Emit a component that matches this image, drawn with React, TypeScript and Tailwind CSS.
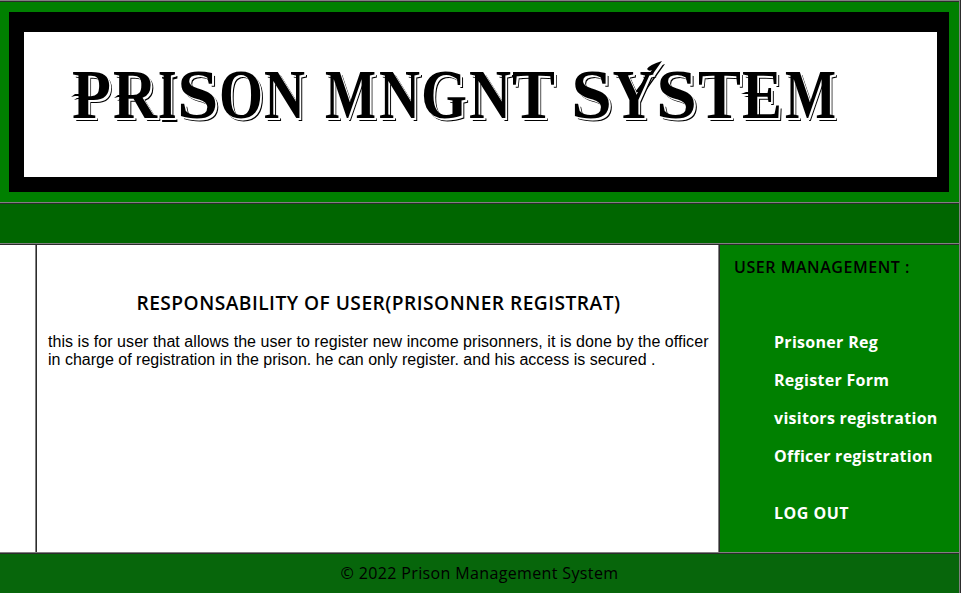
import React from "react";

const sans = "font-['Open_Sans','Noto_Sans',sans-serif]";
const edge = "border-t border-[#808080]";
const inner = "border-t border-[#2c2c2c]";

// Every letter of the banner with its left edge and its width.
const words: [string, number, number][][] = [
  [["P", 72, 39], ["R", 113, 44], ["I", 158, 18.5], ["S", 177, 41.5], ["O", 219, 44], ["N", 264, 41]],
  [["M", 325, 51], ["N", 379, 41], ["G", 421, 46], ["N", 469, 42], ["T", 512, 43]],
  [["S", 571, 41], ["Y", 612.5, 42], ["S", 656, 41], ["T", 698, 43], ["E", 742, 40], ["M", 785, 51]],
];

// Advance widths of the bold serif capitals, in ems.
const advance: Record<string, number> = {
  P: 0.611, R: 0.722, I: 0.389, S: 0.556, O: 0.778, N: 0.722,
  M: 0.944, G: 0.778, T: 0.667, Y: 0.722, E: 0.667,
};
const size = 70;

function Banner() {
  return (
    <svg
      className="block h-[145px] w-[913px] fill-black font-['Liberation_Serif',serif] text-[70px] font-bold [text-shadow:1px_1px_0_#fff,2px_2px_0_#fff,3px_3px_0_#000]"
      viewBox="24 32 913 145"
    >
      {[
        { d: 3, c: "#000" },
        { d: 2, c: "#fff" },
        { d: 1, c: "#fff" },
        { d: 0, c: "#000" },
      ].map((layer) => (
        <g key={layer.d} transform={`translate(${layer.d} ${layer.d})`} fill={layer.c}>
          <path d="M647 69 Q649 65 662 61 L640 92 L635 92 L652 70 Q649 72 647 69Z" />
          <path d="M71 97 L75 94 H86 V96 H75Z" />
          <path d="M114 98 L118 95 H129 V97 H118Z" />
          <path d="M741 94 L746 92 H757 V94 H746Z" />
        </g>
      ))}
      {words.map((letters, i) => (
        <g key={i}>
          {letters.map(([ch, x, w]) => (
            <text key={x} transform={`translate(${x} 118) scale(${w / (advance[ch] * size)} 1)`}>
              {ch}
            </text>
          ))}
        </g>
      ))}
    </svg>
  );
}

function MenuLink({ label, className }: { label: string; className: string }) {
  return (
    <a className={`block h-[38px] whitespace-nowrap leading-[20px] ${className}`}>{label}</a>
  );
}

export default function App() {
  return (
    <div className={`flex h-[593px] w-[961px] overflow-hidden border-r border-[#2c2c2c] bg-white text-black ${sans}`}>
      <div className="flex w-[960px] flex-col border-r border-[#808080]">
        <header className={edge}>
          <div className={`h-[201px] bg-[#008000] pt-[10px] pl-[9px] ${inner}`}>
            <div className="h-[180px] w-[940px] bg-black pt-[20px] pl-[15px]">
              <div className="h-[145px] w-[913px] bg-white">
                <Banner />
              </div>
            </div>
          </div>
        </header>
        <nav className={edge}>
          <div className={`h-[40px] bg-[#006600] ${inner}`} />
        </nav>
        <main className={edge}>
          <div className={`flex h-[308px] ${inner}`}>
            <div className="w-[36px] border-r border-[#808080]" />
            <section className="w-[683px] border-r border-l border-l-[#2c2c2c] border-r-[#808080] pt-[46px] pl-[11px]">
              <h1 className="h-[24px] w-[661px] text-center text-[19.2px] leading-[24px] font-semibold whitespace-nowrap tracking-[0.46px]">
                RESPONSABILITY OF USER(PRISONNER REGISTRAT)
              </h1>
              <p className="mt-[18px] font-['Liberation_Sans',Arial,sans-serif] text-[16px] leading-[18px] whitespace-nowrap">
                <span className="tracking-[0.055px]">
                  this is for user that allows the user to register new income prisonners, it is done by the officer
                </span>
                <br />
                in charge of registration in the prison. he can only register. and his access is secured .
              </p>
            </section>
            <aside className="w-[240px] border-l border-[#2c2c2c] bg-[#008000] pt-[12px] pl-[14px] text-[16px]">
              <h2 className="h-[20px] leading-[20px] font-semibold whitespace-nowrap tracking-[0.54px]">USER MANAGEMENT :</h2>
              <div className="pt-[55px] pl-[40px] font-bold text-white">
                <MenuLink label="Prisoner Reg" className="tracking-[0.3px]" />
                <MenuLink label="Register Form" className="tracking-[0.3px]" />
                <MenuLink label="visitors registration" className="tracking-[0.28px]" />
                <MenuLink label="Officer registration" className="tracking-[0.25px]" />
                <MenuLink label="LOG OUT" className="mt-[19px] tracking-[0.5px]" />
              </div>
            </aside>
          </div>
        </main>
        <footer className={edge}>
          <div className={`h-[40px] bg-[#07660b] pt-[9px] text-center text-[16px] leading-[20px] tracking-[0.36px] ${inner}`}>
            © 2022 Prison Management System
          </div>
        </footer>
      </div>
    </div>
  );
}
